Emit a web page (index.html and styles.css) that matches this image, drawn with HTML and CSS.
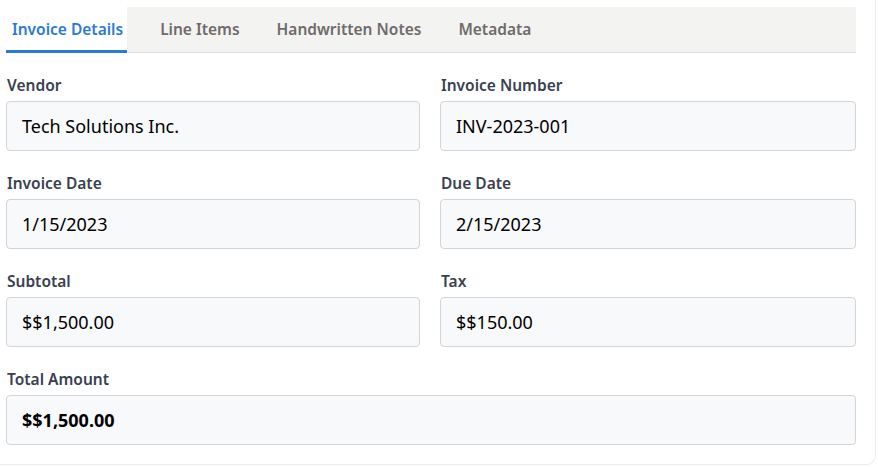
FILE: index.html
```html
<!DOCTYPE html>
<html lang="en">
<head>
<meta charset="utf-8">
<title>Invoice Details</title>
<link rel="stylesheet" href="styles.css">
</head>
<body>
<div class="card">
  <div class="tabs">
    <div class="tab active">Invoice Details</div>
    <div class="tab">Line Items</div>
    <div class="tab">Handwritten Notes</div>
    <div class="tab">Metadata</div>
  </div>
  <div class="form">
    <div class="field">
      <label class="label">Vendor</label>
      <div class="input">Tech Solutions Inc.</div>
    </div>
    <div class="field">
      <label class="label">Invoice Number</label>
      <div class="input">INV-2023-001</div>
    </div>
    <div class="field">
      <label class="label">Invoice Date</label>
      <div class="input">1/15/2023</div>
    </div>
    <div class="field">
      <label class="label">Due Date</label>
      <div class="input">2/15/2023</div>
    </div>
    <div class="field">
      <label class="label">Subtotal</label>
      <div class="input">$$1,500.00</div>
    </div>
    <div class="field">
      <label class="label">Tax</label>
      <div class="input">$$150.00</div>
    </div>
    <div class="field full">
      <label class="label">Total Amount</label>
      <div class="input total">$$1,500.00</div>
    </div>
  </div>
</div>
</body>
</html>
```

FILE: styles.css
```css
* { box-sizing: border-box; }
html, body { margin: 0; padding: 0; background: #ffffff; }
body {
  font-family: "Noto Sans", "Open Sans", sans-serif;
  color: #000;
}
.card {
  width: 876px;
  padding: 7px 19px 19px 6px;
  border-right: 1px solid #ececec;
  border-bottom: 1px solid #ececec;
  border-bottom-right-radius: 9px;
}
.tabs {
  display: flex;
  gap: 27px;
  height: 46px;
  background: #f3f3f1;
  border-bottom: 1px solid #dcdcdc;
}
.tab {
  display: flex;
  align-items: center;
  padding: 0 4px 2px 6px;
  font-size: 15.5px;
  font-weight: 600;
  color: #6f6b6a;
  margin-bottom: -1px;
}
.tab.active {
  background: #ffffff;
  color: #2a7ad2;
  border-bottom: 3px solid #2a7ad2;
  padding-bottom: 0;
  padding-top: 1px;
}
.form {
  display: grid;
  grid-template-columns: 414px 1fr;
  column-gap: 20px;
  row-gap: 22px;
  padding-top: 22px;
}
.field { display: flex; flex-direction: column; }
.field.full { grid-column: 1 / span 2; }
.label {
  font-size: 15.5px;
  line-height: 20px;
  font-weight: 600;
  color: #394150;
  margin-bottom: 6px;
  padding-left: 1px;
}
.input {
  height: 50px;
  display: flex;
  align-items: center;
  padding: 0 15px;
  background: #f8f9fb;
  border: 1px solid #d2d4da;
  border-radius: 4px;
  font-size: 18px;
  color: #000;
}
.input.total { font-weight: 700; }
```
